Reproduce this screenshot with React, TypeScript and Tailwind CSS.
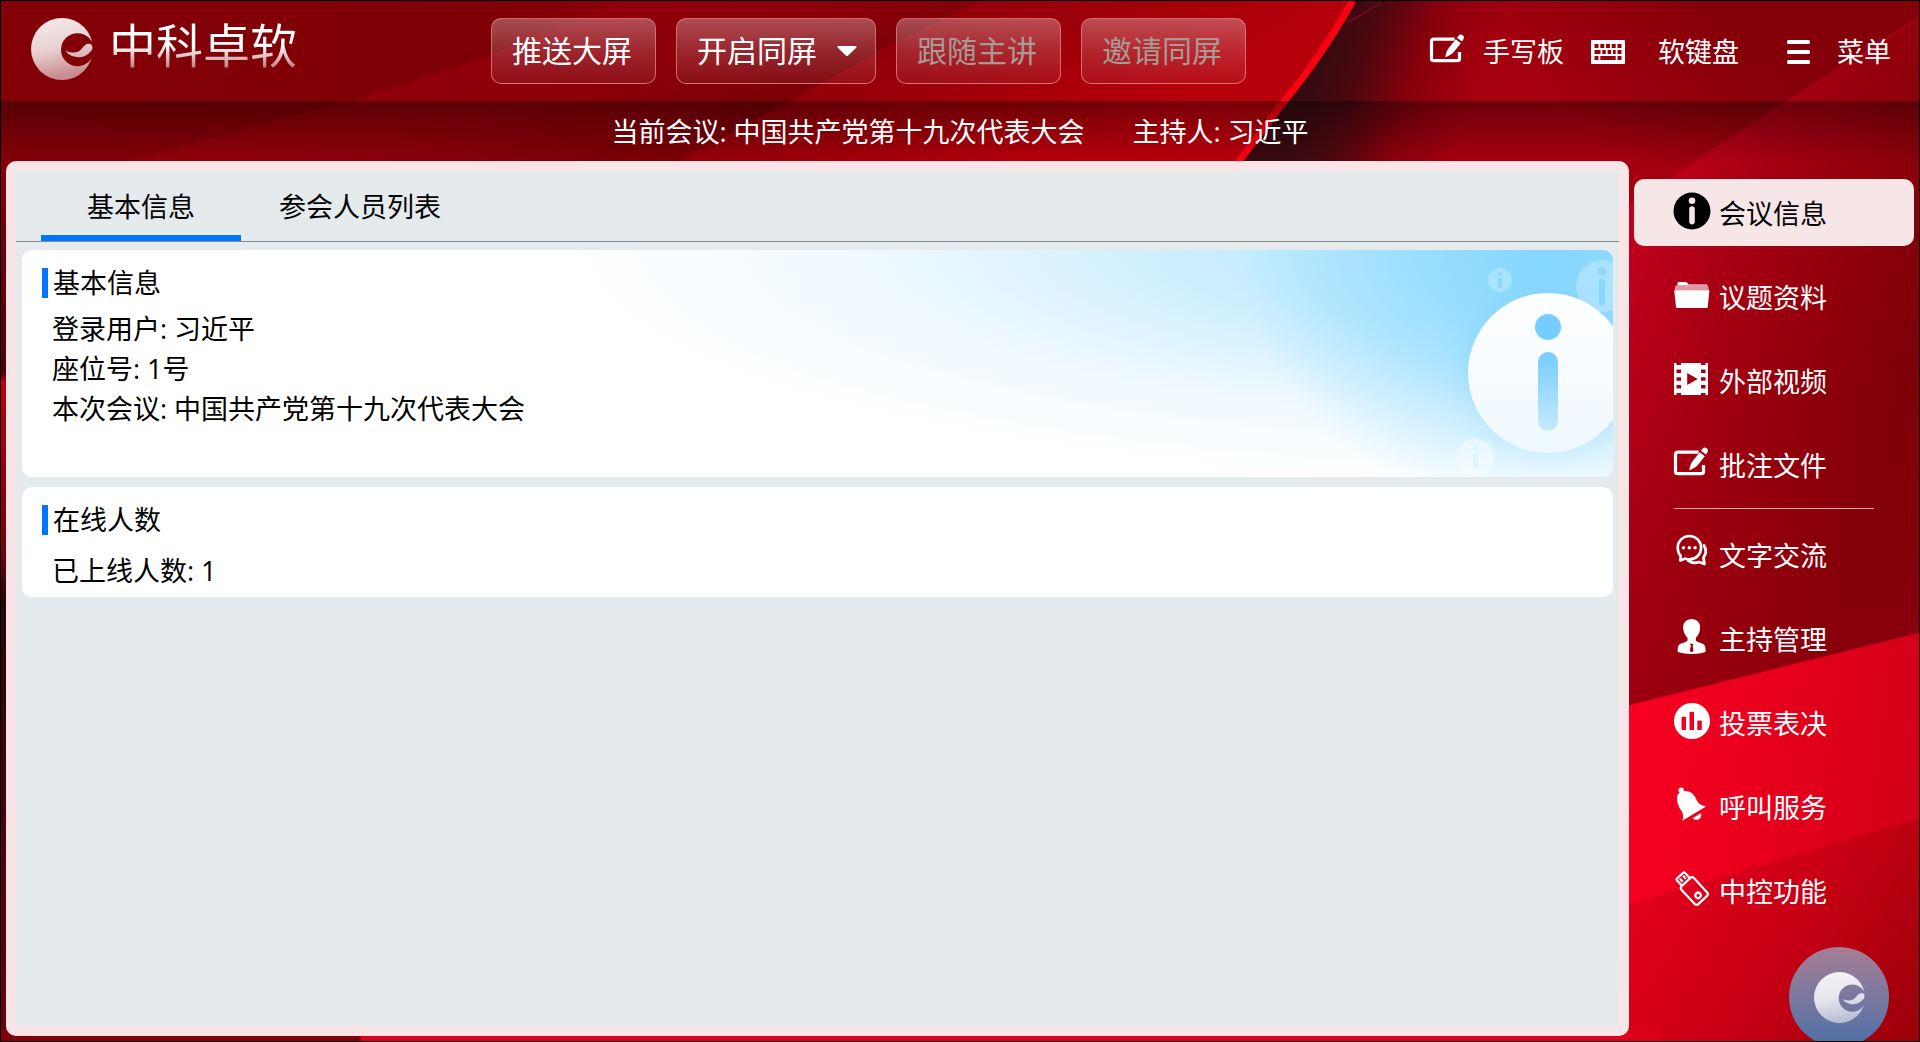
import { useState } from 'react';
import type { ReactNode } from 'react';

function LogoMark({ id, className }: { id: string; className: string }) {
  return (
    <svg viewBox="0 0 184 184" className={className} aria-hidden="true">
      <defs>
        <linearGradient id={`${id}-fill`} x1="0" y1="0" x2="0.2" y2="1">
          <stop offset="0" stopColor="#fff" stopOpacity="0.92" />
          <stop offset="0.55" stopColor="#fff" stopOpacity="0.82" />
          <stop offset="1" stopColor="#fff" stopOpacity="0.55" />
        </linearGradient>
        <mask id={`${id}-cut`}>
          <rect width="184" height="184" fill="#fff" />
          <circle cx="138" cy="94" r="49" fill="#000" />
          <path
            d="M103 97 C122 106 140 104 150 92 C158 80 166 74 176 77 C184 80 184 91 180 96 C170 110 155 119 136 116 C120 113 110 108 103 97Z"
            fill="#fff"
          />
        </mask>
      </defs>
      <circle cx="92" cy="92" r="92" fill={`url(#${id}-fill)`} mask={`url(#${id}-cut)`} />
    </svg>
  );
}

function Icon({ children }: { children: ReactNode }) {
  return (
    <svg viewBox="0 0 36 36" fill="currentColor" className="h-9 w-9 shrink-0 overflow-visible" aria-hidden="true">
      {children}
    </svg>
  );
}

function InfoIcon() {
  return (
    <Icon>
      <path
        fillRule="evenodd"
        d="M18 -0.5a18.5 18.5 0 1 0 0 37a18.5 18.5 0 1 0 0-37Z M18 4.5a3.3 3.3 0 1 1 0 6.6a3.3 3.3 0 1 1 0-6.6Z M15.2 16a2.8 2.8 0 0 1 5.6 0v12.6a2.8 2.8 0 0 1-5.6 0Z"
      />
    </Icon>
  );
}

function FolderIcon() {
  return (
    <Icon>
      <path d="M3.5 8.5V6.2c0-.8.5-1.2 1.200-1.200h7c.7 0 1.100.3 1.500.8l1.300 1.700h17.500c.8 0 1.300.4 1.300 1Z" />
      <path d="M1.500 8.500h32.500l1 5h-34.500Z" opacity="0.6" />
      <path d="M.7 13.200h34.300c.3 0 .5.300.4.6l-1.700 16.400c-.1.500-.4.800-1 .8h-29.700c-.6 0-.9-.3-1-.8L.3 13.800c0-.3.100-.6.400-.6Z" />
    </Icon>
  );
}

function FilmIcon() {
  return (
    <Icon>
      <path
        fillRule="evenodd"
        d="M0 2h2.500v2h4.500v-2h20v2h4.500v-2h2.500v32h-2.500v-2h-4.500v2h-20v-2h-4.500v2h-2.500Z M2.500 8.500v3.500h4.500v-3.500Z M2.500 16.300v3.500h4.500v-3.500Z M2.500 24v3.500h4.500v-3.500Z M27 8.500v3.500h4.500v-3.500Z M27 16.300v3.500h4.500v-3.500Z M27 24v3.500h4.500v-3.500Z M13.200 12v12l10.500-6Z"
      />
    </Icon>
  );
}

function EditIcon() {
  return (
    <Icon>
      <path d="M24.500 7.200H4c-1.500 0-2.500 1-2.500 2.500v17c0 1.500 1 2 2.500 2h23c1.500 0 2.500-.5 2.500-2V20" fill="none" stroke="currentColor" strokeWidth="3.200" />
      <path d="M15.300 25.200c.5-3.600 1.600-6.700 3.600-9.400L25.800 7.300l5 4-7 8.700c-2.300 2.400-5 4.200-8.500 5.200Z" />
      <path d="M27 5.700l1.700-2.200c1-1.300 2.700-1.300 4-.3s1.700 2.700.7 4L32 9.600Z" />
    </Icon>
  );
}

function ChatIcon() {
  return (
    <Icon>
      <path d="M6.800 21.200C4.800 19 3.700 16 3.700 12.700a11.700 11.700 0 1 1 11.700 11.700c-1.600 0-2.800-.3-4-.8l-5.200 1.800Z" fill="none" stroke="currentColor" strokeWidth="2.600" strokeLinejoin="round" />
      <path d="M30 10.500c2 3.300 2.400 8-.5 12l.9 6.500-5.300-2c-4 1.400-8.200.8-11-1.600" fill="none" stroke="currentColor" strokeWidth="2.800" strokeLinejoin="round" strokeLinecap="round" />
      <circle cx="9.500" cy="12.800" r="1.700" />
      <circle cx="15.300" cy="12.800" r="1.700" />
      <circle cx="21.100" cy="12.800" r="1.700" />
    </Icon>
  );
}

function HostIcon() {
  return (
    <Icon>
      <path
        fillRule="evenodd"
        d="M17.700 0c5.300 0 8.600 3.600 8.400 8.800-.1 4.500-1.700 7.500-4.300 10v2.600c1.500 1.800 5 2.300 7.500 3.600 1.600 1 2.200 3 2.200 5.500v2.500c-3.500 1.300-8.500 2-13.800 2s-10.300-.7-14-2v-2.500c0-2.500.6-4.500 2.300-5.500 2.500-1.300 6-1.800 7.500-3.600v-2.600C10.900 16.300 9.300 13.300 9.200 8.800 9 3.600 12.400 0 17.700 0Z M16 24.800l.8 2-.9 5 1.800 1.800 1.800-1.800-.9-5 .8-2Z"
      />
    </Icon>
  );
}

function VoteIcon() {
  return (
    <Icon>
      <path
        fillRule="evenodd"
        d="M18 0a18 18 0 1 0 0 36a18 18 0 1 0 0-36Z M8.500 13.800h2.500a1 1 0 0 1 1 1V27h-3.500a1 1 0 0 1-1-1V14.800a1 1 0 0 1 1-1Z M16.500 8.800h2.500a1 1 0 0 1 1 1V27h-4.500V9.800a1 1 0 0 1 1-1Z M24.300 17.500h2.500a1 1 0 0 1 1 1V26a1 1 0 0 1-1 1h-3.500v-8.500a1 1 0 0 1 1-1Z"
      />
    </Icon>
  );
}

function BellIcon() {
  return (
    <Icon>
      <circle cx="7.200" cy="3.200" r="2.700" />
      <path d="M3 12C2.500 6 7 4.500 10.500 4c6-.5 10 3.300 12.200 9.300 1.200 3 4.500 5.400 9.300 6.200L8.300 33.800c1.900-4.800.5-7.800-1.800-11.300C4.300 19 3.200 15.500 3 12Z" />
      <path d="M18.500 31.300l8.300-5c2 4.500-3 9-8.300 5Z" />
    </Icon>
  );
}

function UsbIcon() {
  return (
    <Icon>
      <g transform="rotate(-43 20 20)" fill="none" stroke="currentColor" strokeWidth="2.200">
        <rect x="11.700" y="8" width="17" height="24.500" rx="2.500" />
        <path d="M14.700 8v-7.500a1.200 1.200 0 0 1 1.200-1.200h8.600a1.200 1.200 0 0 1 1.200 1.200V8" />
        <path d="M18 1.500v4M22.400 1.500v4" />
        <circle cx="20" cy="26" r="2.700" />
      </g>
    </Icon>
  );
}

function KeyboardIcon() {
  return (
    <svg viewBox="0 0 34 24" className="h-6 w-[34px] shrink-0" fill="currentColor" aria-hidden="true">
      <path
        fillRule="evenodd"
        d="M1.500 0h31c1 0 1.500.5 1.500 1.500v21c0 1-.5 1.500-1.500 1.500h-31c-1 0-1.500-.5-1.500-1.500v-21c0-1 .5-1.500 1.500-1.500Z M3.500 4v4h4v-4Z M9.300 4v4h4v-4Z M15 4v4h4v-4Z M20.700 4v4h4v-4Z M26.500 4v4h4v-4Z M3.500 10v4h6v-4Z M11.300 10v4h3.500v-4Z M16.600 10v4h3.500v-4Z M21.900 10v4h2.800v-4Z M26.500 10v4h4v-4Z M3.500 16v4h4v-4Z M9.300 16v4h15.400v-4Z M26.500 16v4h4v-4Z"
      />
    </svg>
  );
}

function MenuIcon() {
  return (
    <svg viewBox="0 0 24 24" className="h-6 w-6 shrink-0" fill="currentColor" aria-hidden="true">
      <rect x="0" y="0" width="23" height="4" rx="1.500" />
      <rect x="0" y="10" width="23" height="4" rx="1.500" />
      <rect x="0" y="20" width="23" height="4" rx="1.500" />
    </svg>
  );
}

function Backdrop() {
  return (
    <svg viewBox="0 0 1920 1042" preserveAspectRatio="none" className="absolute inset-0 h-full w-full" aria-hidden="true">
      <defs>
        <linearGradient id="bg-base" x1="0" y1="0" x2="1" y2="0">
          <stop offset="0" stopColor="#840007" />
          <stop offset="0.25" stopColor="#7e0006" />
          <stop offset="0.5" stopColor="#a8000a" />
          <stop offset="0.7" stopColor="#b8000a" />
        </linearGradient>
        <linearGradient id="bg-facet" gradientUnits="userSpaceOnUse" x1="480" y1="58" x2="524" y2="190">
          <stop offset="0" stopColor="#90000a" />
          <stop offset="0.5" stopColor="#8a0009" />
          <stop offset="1" stopColor="#7a0006" />
        </linearGradient>
        <linearGradient id="bg-bright" gradientUnits="userSpaceOnUse" x1="880" y1="20" x2="970" y2="200">
          <stop offset="0" stopColor="#8e0008" />
          <stop offset="0.5" stopColor="#a00009" />
          <stop offset="1" stopColor="#b6000b" />
        </linearGradient>
        <linearGradient id="bg-dark" gradientUnits="userSpaceOnUse" x1="1325" y1="50" x2="1475" y2="100">
          <stop offset="0" stopColor="#360a0f" />
          <stop offset="0.25" stopColor="#4c080f" />
          <stop offset="0.6" stopColor="#88000c" />
          <stop offset="1" stopColor="#a6000f" />
        </linearGradient>
        <linearGradient id="bg-corner" gradientUnits="userSpaceOnUse" x1="1580" y1="130" x2="1700" y2="0">
          <stop offset="0" stopColor="#7c0007" stopOpacity="0" />
          <stop offset="1" stopColor="#7c0007" stopOpacity="0.8" />
        </linearGradient>
        <linearGradient id="bg-side" gradientUnits="userSpaceOnUse" x1="1625" y1="240" x2="1925" y2="330">
          <stop offset="0" stopColor="#c2001c" />
          <stop offset="0.35" stopColor="#a60012" />
          <stop offset="0.7" stopColor="#90000b" />
          <stop offset="1" stopColor="#7c0009" />
        </linearGradient>
        <linearGradient id="bg-side-fade" x1="0" y1="0" x2="0" y2="1">
          <stop offset="0.3" stopColor="#9a000e" stopOpacity="0" />
          <stop offset="1" stopColor="#9a000e" stopOpacity="0.5" />
        </linearGradient>
        <linearGradient id="bg-hot" gradientUnits="userSpaceOnUse" x1="1630" y1="740" x2="1920" y2="780">
          <stop offset="0" stopColor="#f80022" />
          <stop offset="0.5" stopColor="#e6001c" />
          <stop offset="1" stopColor="#d20018" />
        </linearGradient>
        <linearGradient id="bg-low" gradientUnits="userSpaceOnUse" x1="1640" y1="880" x2="1900" y2="1042">
          <stop offset="0" stopColor="#e4001c" />
          <stop offset="0.5" stopColor="#c80015" />
          <stop offset="1" stopColor="#9e0009" />
        </linearGradient>
        <linearGradient id="bg-left" x1="0" y1="0" x2="0" y2="1">
          <stop offset="0" stopColor="#8c0008" />
          <stop offset="0.24" stopColor="#4c0004" />
          <stop offset="0.25" stopColor="#c0000a" />
          <stop offset="0.45" stopColor="#70000a" />
          <stop offset="0.5" stopColor="#26060a" />
          <stop offset="1" stopColor="#6c0008" />
        </linearGradient>
      </defs>
      <rect width="1920" height="1042" fill="url(#bg-base)" />
      <path d="M110 165 L360 98 L480 58 L620 0 L980 0 L880 50 L790 100 L670 165Z" fill="url(#bg-facet)" />
      <path d="M670 165 L790 100 L880 50 L980 0 L1352 0 L1237 165Z" fill="url(#bg-bright)" />
      <path d="M1355 0 Q1320 60 1286 101 L1237 165 L1640 220 L1920 220 L1920 0Z" fill="url(#bg-dark)" />
      <path d="M1400 0 L1920 0 L1920 30 L1700 165 L1400 165Z" fill="url(#bg-corner)" />
      <path d="M1348 22 L1381 2" stroke="#6a0a28" strokeWidth="2" />
      <path d="M1353 0 Q1320 58 1284 101 L1236 165" fill="none" stroke="#fa0010" strokeWidth="7" />
      <path d="M1920 16 L1788 101 L1670 178 L1620 212 L1620 720 L1920 640Z" fill="url(#bg-side)" />
      <path d="M1620 212 L1920 212 L1920 640 L1620 720Z" fill="url(#bg-side-fade)" />
      <path d="M1920 16 L1788 101 L1670 178 L1620 212" fill="none" stroke="#b80020" strokeWidth="2" opacity="0.6" />
      <path d="M1620 708 L1920 633 L1920 1042 L1620 1042Z" fill="url(#bg-hot)" />
      <path d="M1620 908 L1920 819 L1920 1042 L1620 1042Z" fill="url(#bg-low)" />
      <rect x="0" y="161" width="10" height="881" fill="url(#bg-left)" />
      <rect x="0" y="1030" width="360" height="12" fill="#80000a" />
      <rect x="360" y="1030" width="1300" height="12" fill="#dc001c" />
    </svg>
  );
}

function InfoArtwork() {
  return (
    <svg viewBox="0 0 300 227" className="absolute top-0 right-0 h-[227px] w-[300px]" aria-hidden="true">
      <defs>
        <linearGradient id="art-disc" x1="0" y1="0" x2="0" y2="1">
          <stop offset="0" stopColor="#fff" />
          <stop offset="1" stopColor="#eef8ff" />
        </linearGradient>
        <linearGradient id="art-stem" x1="0" y1="0" x2="0" y2="1">
          <stop offset="0" stopColor="#74cdfd" />
          <stop offset="1" stopColor="#c6e9fd" />
        </linearGradient>
        <filter id="art-glow" x="-30%" y="-30%" width="160%" height="160%">
          <feGaussianBlur stdDeviation="14" />
        </filter>
      </defs>
      <circle cx="235" cy="115" r="78" fill="#7fd0fb" opacity="0.5" filter="url(#art-glow)" />
      <g fill="#fff" opacity="0.25">
        <circle cx="187" cy="30" r="12" />
        <circle cx="289" cy="36" r="26" />
      </g>
      <g fill="#7fd2fb" opacity="0.7">
        <circle cx="187" cy="24" r="2" />
        <rect x="185" y="28" width="4" height="10" rx="2" />
        <circle cx="289" cy="21" r="4" />
        <rect x="286" y="29" width="6" height="26" rx="3" />
      </g>
      <circle cx="162" cy="207" r="19" fill="#fff" opacity="0.4" />
      <circle cx="162" cy="198" r="3" fill="#e0f3fe" />
      <rect x="160" y="204" width="5" height="14" rx="2" fill="#e0f3fe" />
      <circle cx="235" cy="123" r="80" fill="url(#art-disc)" />
      <circle cx="235" cy="77" r="13" fill="#74cdfd" />
      <rect x="225" y="102" width="20" height="79" rx="10" fill="url(#art-stem)" />
    </svg>
  );
}

const toolbarClass =
  'flex h-[66px] items-center rounded-[10px] border border-[#e07f86]/80 bg-linear-to-b from-white/30 via-white/15 to-white/5 pl-5 text-3xl';

const toolActions = [
  { label: '推送大屏', disabled: false, dropdown: false },
  { label: '开启同屏', disabled: false, dropdown: true },
  { label: '跟随主讲', disabled: true, dropdown: false },
  { label: '邀请同屏', disabled: true, dropdown: false },
];

const navGroups = [
  [
    { label: '会议信息', icon: <InfoIcon /> },
    { label: '议题资料', icon: <FolderIcon /> },
    { label: '外部视频', icon: <FilmIcon /> },
    { label: '批注文件', icon: <EditIcon /> },
  ],
  [
    { label: '文字交流', icon: <ChatIcon /> },
    { label: '主持管理', icon: <HostIcon /> },
    { label: '投票表决', icon: <VoteIcon /> },
    { label: '呼叫服务', icon: <BellIcon /> },
    { label: '中控功能', icon: <UsbIcon /> },
  ],
];

const tabs = ['基本信息', '参会人员列表'];

function CardTitle({ children }: { children: ReactNode }) {
  return (
    <h2 className="flex items-center gap-[5px]">
      <span className="h-[30px] w-[6px] bg-[#0075ff]" />
      <span className="leading-[30px]">{children}</span>
    </h2>
  );
}

export default function App() {
  const [activeTab, setActiveTab] = useState('基本信息');
  const [activeNav, setActiveNav] = useState('会议信息');

  return (
    <div className="relative flex min-h-screen flex-col overflow-hidden border border-black bg-[#800007] font-['Open_Sans','Noto_Sans_CJK_SC',sans-serif] text-[27px] font-normal text-white">
      <Backdrop />

      <header className="relative flex h-[100px] items-center justify-between pr-[28px] pl-[30px]">
        <div className="flex w-[460px] items-center gap-4 pb-1">
          <LogoMark id="brand" className="h-[62px] w-[62px]" />
          <span className="bg-linear-to-b from-white from-45% to-white/30 to-90% bg-clip-text pb-2 text-[47px] leading-[60px] text-transparent">
            中科卓软
          </span>
        </div>

        <div className="flex flex-1 gap-5">
          {toolActions.map((action) => (
            <button
              key={action.label}
              disabled={action.disabled}
              className={`${toolbarClass} ${action.dropdown ? 'w-[200px]' : 'w-[165px]'} ${
                action.disabled ? 'text-[#a89a96]' : 'text-white'
              }`}
            >
              {action.label}
              {action.dropdown && (
                <svg viewBox="0 0 20 10" className="ml-5 h-[10px] w-[20px]" fill="currentColor" aria-hidden="true">
                  <path d="M1.500 0h17c1 0 1.400 1 .7 1.700L11.500 9.300c-.9.900-2.100.9-3 0L.8 1.700C.1 1 .5 0 1.500 0Z" />
                </svg>
              )}
            </button>
          ))}
        </div>

        <div className="flex items-center pt-[2px]">
          <button className="flex items-center gap-[17px]">
            <span className="mb-1">
              <EditIcon />
            </span>
            手写板
          </button>
          <button className="ml-[27px] flex items-center gap-[33px]">
            <KeyboardIcon />
            软键盘
          </button>
          <button className="ml-12 flex items-center gap-[26px]">
            <MenuIcon />
            菜单
          </button>
        </div>
      </header>

      <div className="relative flex h-[60px] items-center justify-center gap-12 bg-linear-to-b from-black/35 to-transparent pt-[2px]">
        <p>当前会议: 中国共产党第十九次代表大会</p>
        <p>主持人: 习近平</p>
      </div>

      <div className="relative flex flex-1 items-stretch">
        <main className="mb-[5px] ml-[5px] min-w-0 flex-1 rounded-[10px] bg-[#f9e5e8] p-[10px] text-black">
          <div className="h-full bg-[#e5eaed]">
            <div role="tablist" className="flex h-[71px] border-b border-[#84898d] px-[25px]">
              {tabs.map((tab) => (
                <button
                  key={tab}
                  role="tab"
                  aria-selected={tab === activeTab}
                  onClick={() => setActiveTab(tab)}
                  className={`min-w-[200px] border-b-[6px] px-[38px] pt-2 ${
                    tab === activeTab ? 'border-[#0075ff]' : 'border-transparent'
                  }`}
                >
                  {tab}
                </button>
              ))}
            </div>

            <div className="flex flex-col gap-[10px] px-[6px] pt-2">
              <section className="relative min-h-[227px] overflow-hidden rounded-[10px] bg-white bg-[radial-gradient(ellipse_310px_260px_at_96%_0%,#84d6ff_0%,#90dbffcc_40%,#b5e6ff00_100%),radial-gradient(ellipse_1050px_235px_at_100%_0%,#aee4ff_0%,#c6ecff_35%,#eef9ff_70%,#ffffff_100%)] px-5 pt-[18px]">
                <InfoArtwork />
                <div className="relative">
                  <CardTitle>基本信息</CardTitle>
                  <div className="mt-[11px] pl-[10px] leading-10">
                    <p>登录用户: 习近平</p>
                    <p>座位号: 1号</p>
                    <p>本次会议: 中国共产党第十九次代表大会</p>
                  </div>
                </div>
              </section>

              <section className="min-h-[110px] rounded-[10px] bg-white px-5 pt-[18px]">
                <CardTitle>在线人数</CardTitle>
                <p className="mt-4 pl-[10px] leading-10">已上线人数: 1</p>
              </section>
            </div>
          </div>
        </main>

        <nav className="w-[290px] shrink-0 px-[5px] pt-[18px]">
          {navGroups.map((group, index) => (
            <div key={index}>
              {index > 0 && <hr className="mt-[10px] mr-10 mb-3 ml-10 border-[#e9a9ab]" />}
              <div className="flex flex-col gap-[17px]">
                {group.map((item) => (
                  <button
                    key={item.label}
                    onClick={() => setActiveNav(item.label)}
                    className={`flex h-[67px] items-center gap-[9px] rounded-[10px] pt-[3px] pl-10 ${
                      item.label === activeNav ? 'bg-[#f7e6e8] text-black' : 'text-white'
                    }`}
                  >
                    <span className="mb-[7px]">{item.icon}</span>
                    {item.label}
                  </button>
                ))}
              </div>
            </div>
          ))}
        </nav>
      </div>

      <button
        aria-label="中科卓软"
        className="absolute right-[30px] -bottom-[6px] flex h-[100px] w-[100px] items-center justify-center rounded-full bg-linear-to-b from-[#a57d94] to-[#4a70a8]"
      >
        <LogoMark id="float" className="h-[51px] w-[51px]" />
      </button>
    </div>
  );
}
